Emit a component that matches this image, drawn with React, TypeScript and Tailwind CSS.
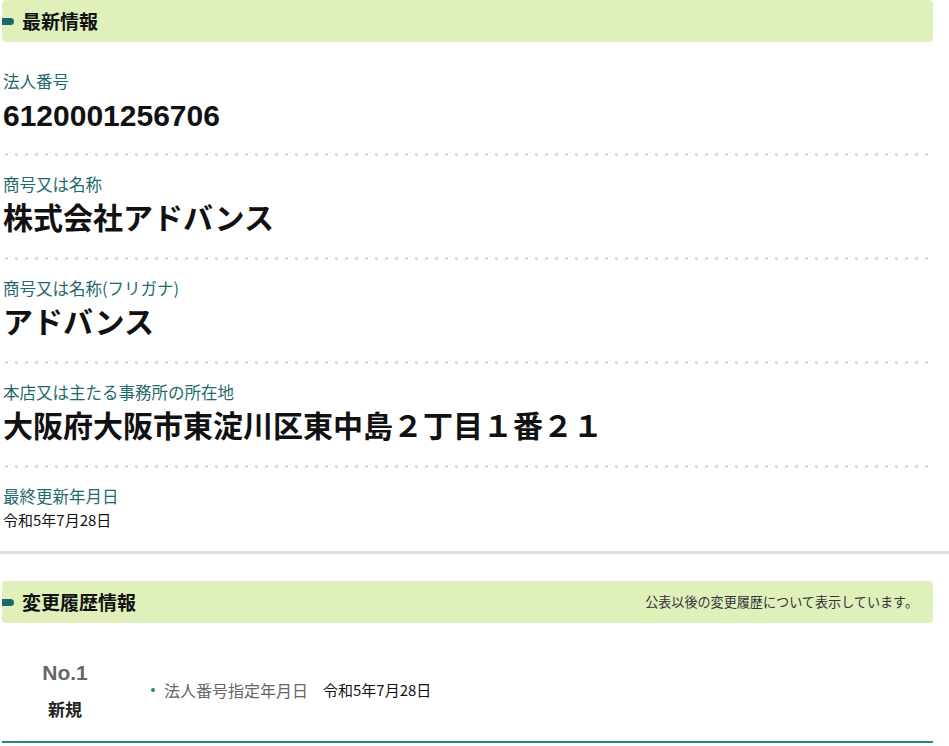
import React from "react";

const JP = { fontFamily: '"Noto Sans CJK JP", "Noto Sans", sans-serif' };
const VAL = { fontFamily: '"Liberation Sans", "Noto Sans CJK JP", sans-serif' };

function Bar({ title, note }: { title: string; note?: string }) {
  return (
    <div className="flex h-[42px] items-center justify-between rounded-[4px] bg-[#dff0bb]">
      <div className="flex items-center">
        <span className="block h-[7px] w-[12px] rounded-r-full bg-[#19696a]" />
        <span className="ml-[8px] text-[19px] font-bold leading-[24px] text-[#111]">{title}</span>
      </div>
      {note && <span className="mr-[15px] text-[13.1px] leading-[20px] text-[#333]">{note}</span>}
    </div>
  );
}

function Dots() {
  return (
    <div className="h-[3px] w-full bg-[linear-gradient(to_right,#dedede_3px,transparent_3px)] bg-[length:10px_3px] bg-[position:3px_0] bg-repeat-x" />
  );
}

function Row({ label, value, pt, pb }: { label: string; value: string; pt: string; pb: string }) {
  return (
    <div className={`${pt} ${pb}`}>
      <div className="pl-[1px] text-[16.5px] leading-[24px] text-[#1f6a6c]">{label}</div>
      <div className="mt-[3px] pl-[1px] text-[30px] font-bold leading-[40px] text-[#111]" style={VAL}>
        {value}
      </div>
    </div>
  );
}

export default function App() {
  return (
    <div className="min-h-[746px] w-full bg-white" style={JP}>
      <div className="ml-[2px] w-[931px]">
        <Bar title="最新情報" />
        <Row label="法人番号" value="6120001256706" pt="pt-[27px]" pb="pb-[17px]" />
        <Dots />
        <Row label="商号又は名称" value="株式会社アドバンス" pt="pt-[16px]" pb="pb-[18px]" />
        <Dots />
        <Row label="商号又は名称(フリガナ)" value="アドバンス" pt="pt-[16px]" pb="pb-[18px]" />
        <Dots />
        <Row label="本店又は主たる事務所の所在地" value="大阪府大阪市東淀川区東中島２丁目１番２１" pt="pt-[16px]" pb="pb-[18px]" />
        <Dots />
        <div className="pt-[16px]">
          <div className="pl-[1px] text-[16.5px] leading-[24px] text-[#1f6a6c]">最終更新年月日</div>
          <div className="mt-[2px] pl-[1px] text-[15px] leading-[20px] text-[#111]">令和5年7月28日</div>
        </div>
      </div>
      <div className="mt-[21px] h-[3px] w-full bg-[#dcdcdc]" />
      <div className="ml-[2px] mt-[27px] w-[931px]">
        <Bar title="変更履歴情報" note="公表以後の変更履歴について表示しています。" />
        <div className="flex items-center border-b-2 border-[#218a80] pb-[20px] pt-[36px]">
          <div className="flex w-[126px] flex-col items-center">
            <div
              className="text-[21px] font-bold leading-[28px] text-[#666]"
              style={{ fontFamily: '"Liberation Sans", Arial, sans-serif' }}
            >
              No.1
            </div>
            <div className="mt-[10px] text-[17px] font-bold leading-[24px] text-[#222]">新規</div>
          </div>
          <div className="ml-[23px] flex items-center">
            <span className="block h-[4px] w-[4px] rounded-full bg-[#1a8a78]" />
            <span className="ml-[9px] text-[16px] leading-[24px] text-[#666]">法人番号指定年月日</span>
            <span className="ml-[15px] text-[15px] leading-[24px] text-[#111]">令和5年7月28日</span>
          </div>
        </div>
      </div>
    </div>
  );
}
